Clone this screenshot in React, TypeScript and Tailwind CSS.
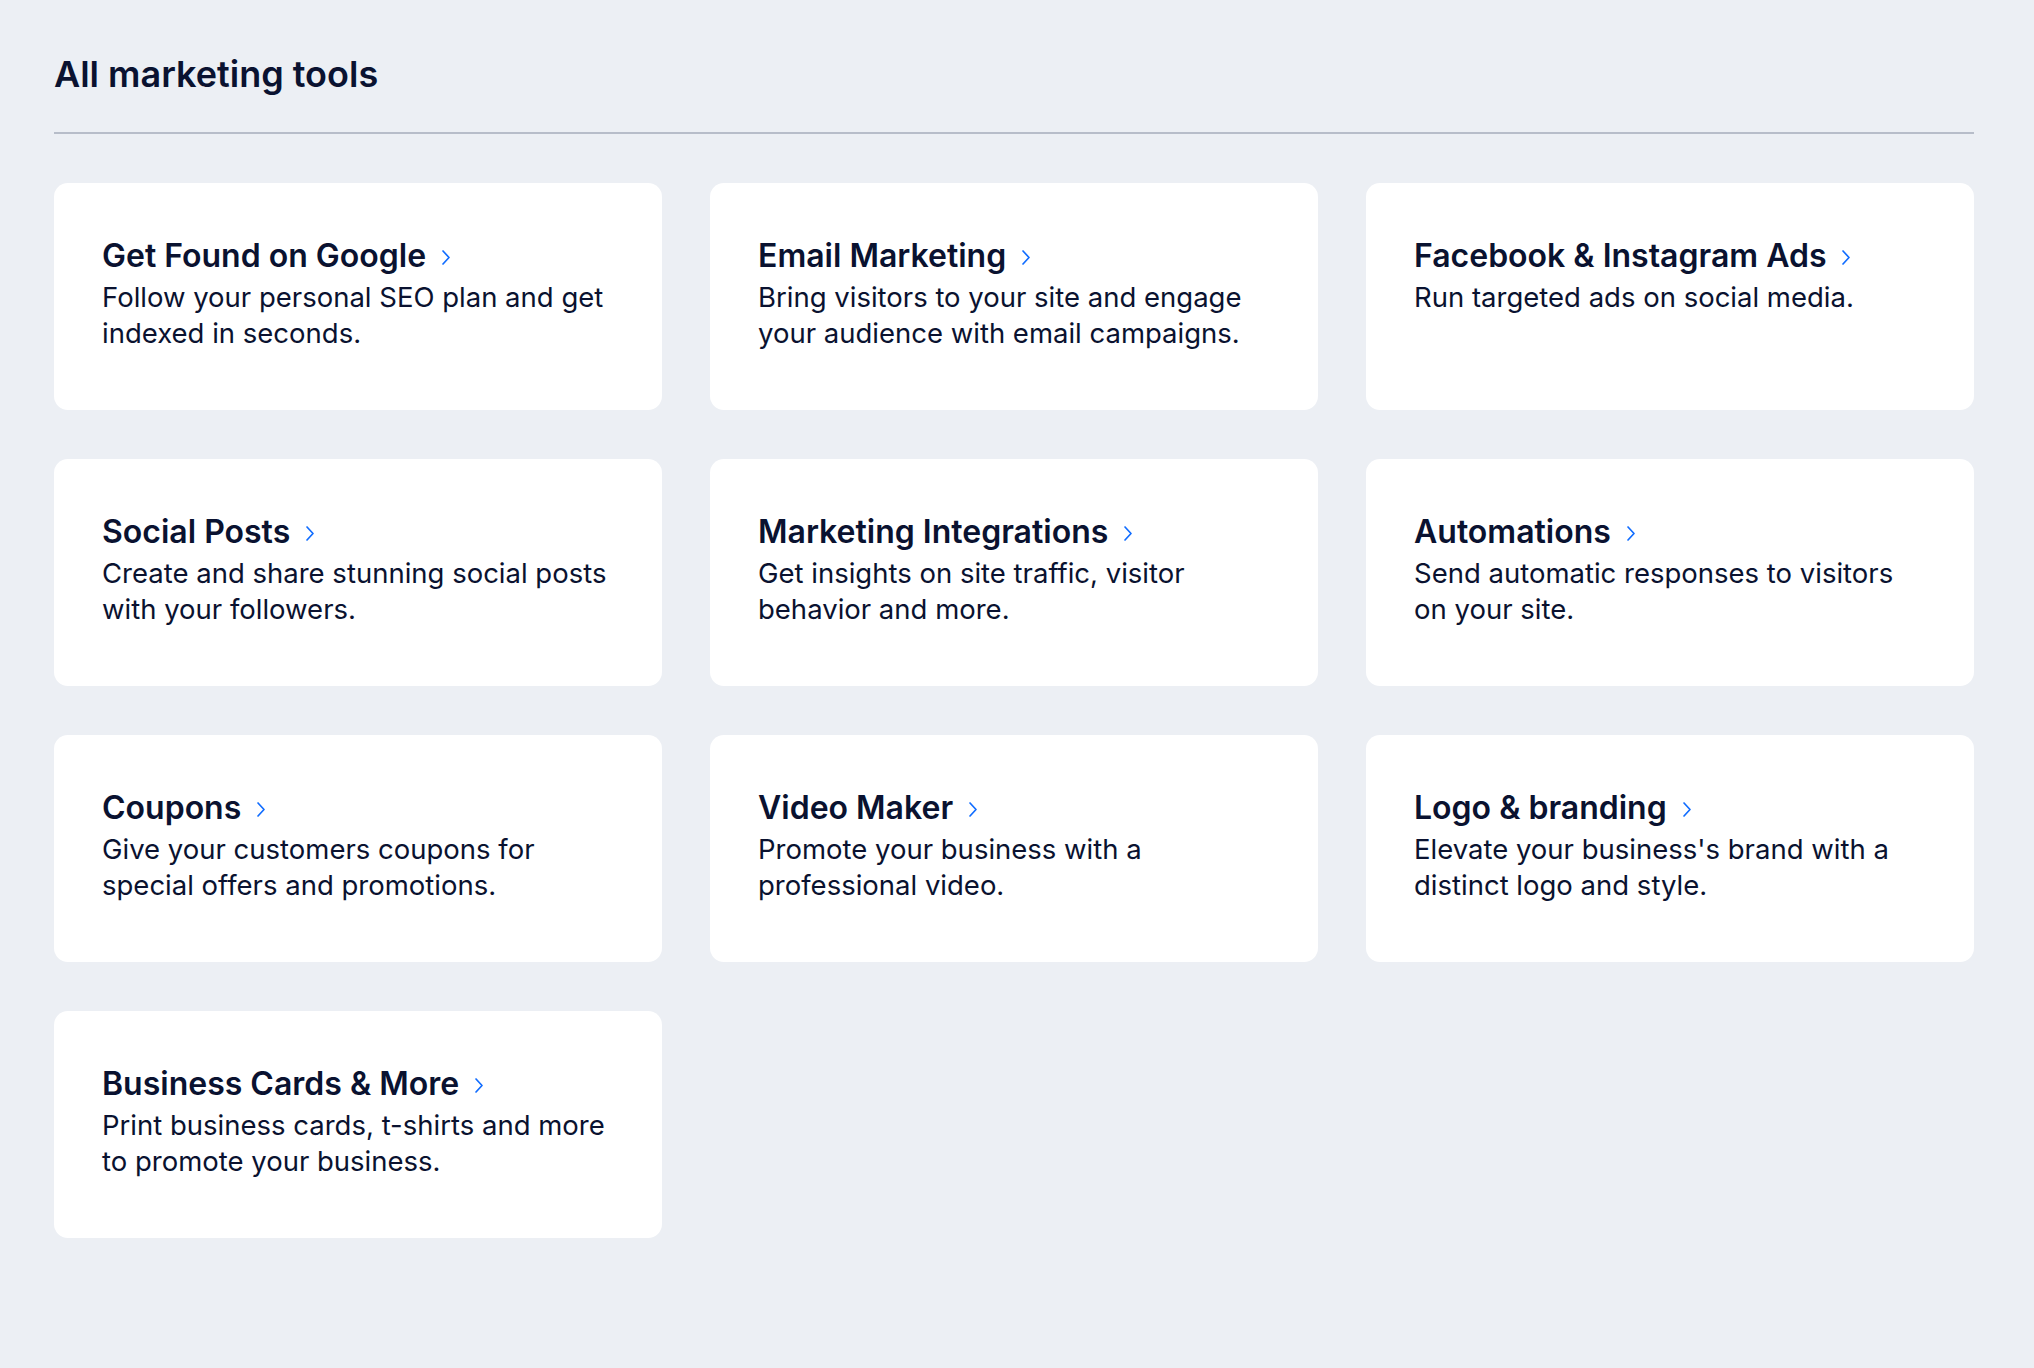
const tools = [
  { title: 'Get Found on Google', desc: 'Follow your personal SEO plan and get indexed in seconds.' },
  { title: 'Email Marketing', desc: 'Bring visitors to your site and engage your audience with email campaigns.' },
  { title: 'Facebook & Instagram Ads', desc: 'Run targeted ads on social media.' },
  { title: 'Social Posts', desc: 'Create and share stunning social posts with your followers.' },
  { title: 'Marketing Integrations', desc: 'Get insights on site traffic, visitor behavior and more.' },
  { title: 'Automations', desc: 'Send automatic responses to visitors on your site.' },
  { title: 'Coupons', desc: 'Give your customers coupons for special offers and promotions.' },
  { title: 'Video Maker', desc: 'Promote your business with a professional video.' },
  { title: 'Logo & branding', desc: "Elevate your business's brand with a distinct logo and style." },
  { title: 'Business Cards & More', desc: 'Print business cards, t-shirts and more to promote your business.' },
];

function Chevron() {
  return (
    <svg width="10" height="17" viewBox="0 0 10 17" fill="none" className="mt-[3px] shrink-0">
      <path d="M2 2l6 6.5L2 15" stroke="#116dff" strokeWidth="1.7" strokeLinecap="round" strokeLinejoin="round" />
    </svg>
  );
}

export default function App() {
  return (
    <div className="min-h-screen w-full bg-[#eceff4] font-['Inter',sans-serif] text-[#0a1230]">
      <div className="pl-[54px] pr-[60px] pt-[53px] pb-12">
        <h1 className="text-[36px] leading-[42px] font-semibold">All marketing tools</h1>
        <div className="mt-[37px] h-[2px] bg-[#b7bdc9]" />
        <div className="mt-[49px] grid grid-cols-3 gap-x-[48px] gap-y-[49px]">
          {tools.map((t) => (
            <div key={t.title} className="h-[227px] rounded-[14px] bg-white px-[48px] pt-[49px] cursor-pointer">
              <div className="flex items-center gap-[15px]">
                <h2 className="text-[32px] leading-[48px] font-semibold">{t.title}</h2>
                <Chevron />
              </div>
              <p className="-mt-[1px] text-[27.5px] leading-[36px] font-normal">{t.desc}</p>
            </div>
          ))}
        </div>
      </div>
    </div>
  );
}
